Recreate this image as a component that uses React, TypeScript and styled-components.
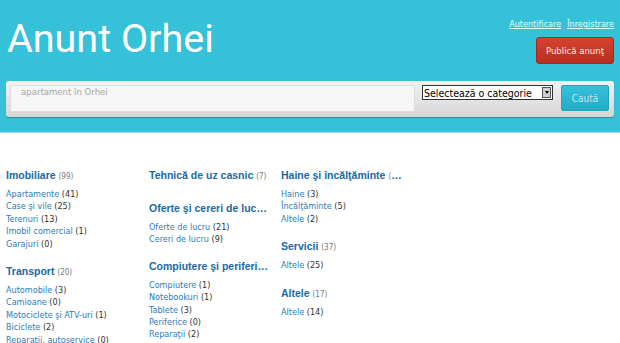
import React from "react";
import styled, { createGlobalStyle } from "styled-components";

const Global = createGlobalStyle`
  html, body { margin: 0; padding: 0; background: #fff; }
  body { font-family: "DejaVu Sans", Verdana, sans-serif; }
`;

const Header = styled.header`
  background: #35c2d8;
  height: 132px;
  border-bottom: 1px solid #9be0ec;
  padding: 0 6px 0 6px;
  box-sizing: content-box;
  display: flex;
  flex-direction: column;
`;

const TopRow = styled.div`
  display: flex;
  justify-content: space-between;
  align-items: flex-start;
  height: 81px;
`;

const Title = styled.h1`
  margin: 14px 0 0 1px;
  font-family: Roboto, "Open Sans", sans-serif;
  font-weight: 400;
  font-size: 39.5px;
  line-height: 50px;
  color: #fff;
`;

const RightBox = styled.div`
  display: flex;
  flex-direction: column;
  align-items: flex-end;
  padding-top: 18px;
  gap: 7px;
`;

const AuthLinks = styled.div`
  display: flex;
  gap: 6px;
`;

const AuthLink = styled.a`
  font-family: "DejaVu Sans Condensed", "DejaVu Sans", sans-serif;
  font-size: 9px;
  color: #e6f9fd;
  text-decoration: underline;
  line-height: 12px;
`;

const PublishButton = styled.button`
  width: 78px;
  height: 27px;
  border: 1px solid #a32a1c;
  border-radius: 3px;
  background: linear-gradient(#d44330, #b92e1f);
  color: #fde9e5;
  font-family: "DejaVu Sans Condensed", "DejaVu Sans", sans-serif;
  font-size: 9.5px;
  padding: 0;
`;

const SearchBar = styled.form`
  display: flex;
  align-items: flex-start;
  height: 36px;
  box-sizing: border-box;
  margin: 0;
  padding: 4px 5px 4px 4px;
  border-radius: 3px;
  background: linear-gradient(#f2f2f2, #d6d6d6);
  box-shadow: 0 1px 1px rgba(0, 0, 0, 0.25);
`;

const SearchInput = styled.div`
  width: 405px;
  height: 27px;
  box-sizing: border-box;
  background: #f6f6f6;
  border: 1px solid #dedede;
  border-radius: 2px;
  padding: 0 10px;
  font-family: "DejaVu Sans Condensed", "DejaVu Sans", sans-serif;
  font-size: 9.5px;
  color: #a6a6a6;
  line-height: 12px;
`;

const Select = styled.div`
  margin-left: 7px;
  width: 131px;
  height: 15px;
  box-sizing: border-box;
  border: 1px solid #333;
  background: #fff;
  display: flex;
  align-items: center;
  justify-content: space-between;
  font-family: "DejaVu Sans Condensed", "DejaVu Sans", sans-serif;
  font-size: 10.5px;
  white-space: nowrap;
  color: #000;
  padding-left: 1px;
`;

const Arrow = styled.span`
  width: 9px;
  height: 11px;
  margin-right: 1px;
  background: #d0d0d0;
  border: 1px solid #555;
  box-sizing: border-box;
  display: flex;
  align-items: center;
  justify-content: center;
  &::after {
    content: "";
    border-left: 2.5px solid transparent;
    border-right: 2.5px solid transparent;
    border-top: 3px solid #000;
  }
`;

const SearchButton = styled.button`
  margin-left: 8px;
  width: 48px;
  height: 26px;
  border: 1px solid #25a5bd;
  border-radius: 2px;
  background: linear-gradient(#36c0d9, #22acc6);
  color: #bde9f2;
  font-family: "DejaVu Sans Condensed", "DejaVu Sans", sans-serif;
  font-size: 10px;
  padding: 0;
`;

const Columns = styled.main`
  display: grid;
  grid-template-columns: 143px 132px 125px;
  padding: 35px 0 0 6px;
`;

const Column = styled.div`
  display: flex;
  flex-direction: column;
  min-width: 0;
`;

const Group = styled.section<{ $gap: number }>`
  margin-bottom: ${(p) => p.$gap}px;
  min-width: 0;
`;

const Heading = styled.h2`
  margin: 0 0 4px 0;
  font-family: "Liberation Sans", Arial, sans-serif;
  font-weight: 700;
  font-size: 10.5px;
  line-height: 14px;
  color: #1a6aa3;
  white-space: nowrap;
  overflow: hidden;
  text-overflow: ellipsis;
  width: 121px;
`;

const HeadCount = styled.span`
  font-family: "DejaVu Sans Condensed", "DejaVu Sans", sans-serif;
  font-weight: 400;
  font-size: 8px;
  color: #777;
`;

const Item = styled.div`
  font-family: "DejaVu Sans Condensed", "DejaVu Sans", sans-serif;
  font-size: 9px;
  line-height: 12.4px;
  color: #333;
  white-space: nowrap;
`;

const ItemLink = styled.a`
  color: #2b7cb8;
  text-decoration: none;
`;

type Cat = { title: string; count: number; items: [string, number][]; gap: number };

const columns: Cat[][] = [
  [
    {
      title: "Imobiliare",
      count: 99,
      gap: 14,
      items: [
        ["Apartamente", 41],
        ["Case şi vile", 25],
        ["Terenuri", 13],
        ["Imobil comercial", 1],
        ["Garajuri", 0],
      ],
    },
    {
      title: "Transport",
      count: 20,
      gap: 0,
      items: [
        ["Automobile", 3],
        ["Camioane", 0],
        ["Motociclete şi ATV-uri", 1],
        ["Biciclete", 2],
        ["Reparaţii, autoservice", 0],
      ],
    },
  ],
  [
    { title: "Tehnică de uz casnic", count: 7, gap: 13, items: [] },
    {
      title: "Oferte şi cereri de lucru",
      count: 30,
      gap: 13,
      items: [
        ["Oferte de lucru", 21],
        ["Cereri de lucru", 9],
      ],
    },
    {
      title: "Compiutere şi periferice",
      count: 7,
      gap: 0,
      items: [
        ["Compiutere", 1],
        ["Notebookuri", 1],
        ["Tablete", 3],
        ["Periferice", 0],
        ["Reparaţii", 2],
      ],
    },
  ],
  [
    {
      title: "Haine şi încălţăminte",
      count: 10,
      gap: 14,
      items: [
        ["Haine", 3],
        ["Încălţăminte", 5],
        ["Altele", 2],
      ],
    },
    { title: "Servicii", count: 37, gap: 14, items: [["Altele", 25]] },
    { title: "Altele", count: 17, gap: 0, items: [["Altele", 14]] },
  ],
];

export default function App() {
  return (
    <>
      <Global />
      <Header>
        <TopRow>
          <Title>Anunt Orhei</Title>
          <RightBox>
            <AuthLinks>
              <AuthLink href="#">Autentificare</AuthLink>
              <AuthLink href="#">Înregistrare</AuthLink>
            </AuthLinks>
            <PublishButton type="button">Publică anunţ</PublishButton>
          </RightBox>
        </TopRow>
        <SearchBar>
          <SearchInput>apartament în Orhei</SearchInput>
          <Select>
            Selectează o categorie
            <Arrow />
          </Select>
          <SearchButton type="button">Caută</SearchButton>
        </SearchBar>
      </Header>
      <Columns>
        {columns.map((col, ci) => (
          <Column key={ci}>
            {col.map((cat) => (
              <Group key={cat.title} $gap={cat.gap}>
                <Heading>
                  {cat.title} <HeadCount>({cat.count})</HeadCount>
                </Heading>
                {cat.items.map(([name, n]) => (
                  <Item key={name}>
                    <ItemLink href="#">{name}</ItemLink> ({n})
                  </Item>
                ))}
              </Group>
            ))}
          </Column>
        ))}
      </Columns>
    </>
  );
}
